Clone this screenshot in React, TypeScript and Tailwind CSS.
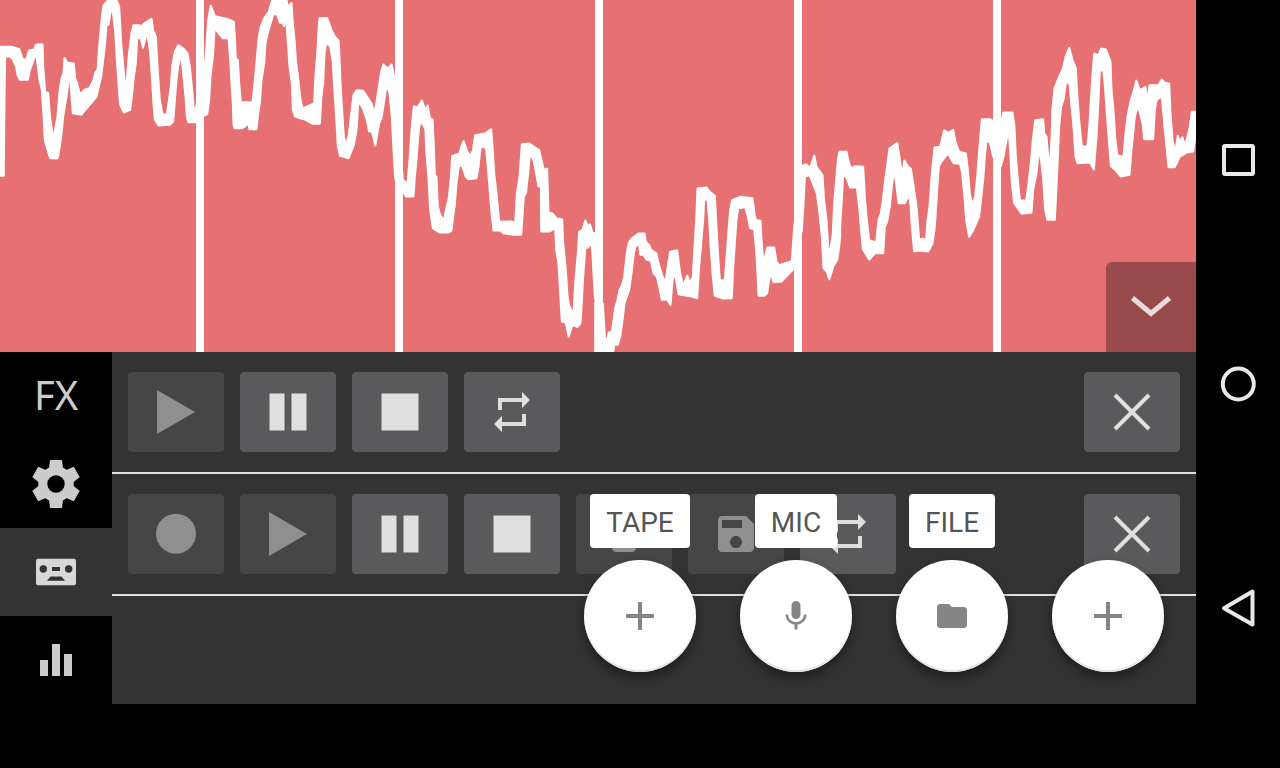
import type { ReactNode } from 'react'

/* Outline of the recorded signal, in thirds of a pixel, one closed shape per stretch. */
const WAVE: { shift: string; points: string }[] = [
  {
    shift: 'translate(0 0)',
    points:
      '0,140 35,140 58,147 68,175 72,180 80,175 86,152 104,147 107,134 128,132 130,200 136,275 145,278 150,345 157,395 162,410 166,380 172,350 178,275 184,235 190,220 193,172 203,188 222,190 226,235 232,250 240,282 255,268 268,264 280,240 285,218 292,210 298,130 304,60 310,15 325,0 350,0 358,20 364,130 370,195 375,250 380,240 386,165 394,100 400,75 418,75 422,80 432,70 455,55 460,92 468,110 473,200 480,300 488,343 500,343 505,310 512,260 516,200 524,155 535,135 550,145 563,160 570,200 578,280 582,335 588,320 612,215 618,150 624,60 632,15 645,48 685,57 702,65 705,110 708,175 714,180 718,250 724,320 728,306 748,306 757,308 764,240 770,175 776,110 782,80 792,55 806,35 816,0 860,0 864,20 875,8 878,60 885,130 888,180 895,235 901,290 901,355 885,350 878,330 875,250 868,200 864,140 858,60 852,80 846,65 840,70 830,42 820,45 806,90 797,130 793,190 785,240 780,310 775,340 770,388 748,388 745,370 735,380 726,385 704,385 700,375 698,310 694,250 690,180 685,115 668,115 652,95 644,88 640,160 632,230 628,300 622,343 612,348 588,367 565,367 560,350 556,290 550,230 545,180 540,180 535,200 530,240 525,300 520,365 510,375 475,377 464,358 460,310 455,230 450,160 442,103 435,120 429,145 422,115 412,115 408,190 402,230 396,290 391,330 371,338 360,315 355,250 350,180 345,95 338,35 332,35 326,75 320,75 316,130 310,180 304,230 290,290 275,308 244,345 218,340 214,290 210,240 206,240 200,290 190,350 184,410 175,470 172,476 150,475 145,460 134,420 130,345 125,270 118,240 110,175 104,170 98,190 90,210 84,240 60,240 52,225 48,200 38,178 30,170 16,170 14,300 12,490 12,528 0,528',
  },
  {
    shift: 'translate(900 150)',
    points:
      '0,140 8,175 30,165 42,160 46,75 52,0 55,-60 58,-96 82,-96 95,-60 105,-40 116,-28 118,0 122,100 128,200 132,260 138,285 146,255 152,200 160,135 170,120 190,122 215,160 223,190 230,150 236,110 242,70 250,42 262,55 275,42 285,90 309,390 322,400 328,330 335,230 341,168 352,172 366,150 375,178 384,165 390,205 398,208 402,290 405,375 410,380 414,470 420,492 432,512 437,480 445,450 452,385 456,318 478,310 484,288 491,272 500,298 510,318 518,303 525,255 555,250 574,237 578,290 583,370 590,430 598,515 635,514 645,520 650,430 658,380 665,282 688,280 718,300 732,360 742,355 746,487 758,490 770,505 787,507 790,580 797,650 803,735 807,765 820,790 825,700 833,610 837,545 847,540 856,510 864,528 870,522 878,548 885,550 885,750 880,670 875,580 863,595 858,585 855,610 850,680 845,770 842,820 832,832 818,825 806,862 797,818 785,815 780,730 775,640 768,600 765,535 748,545 723,545 722,410 715,410 708,370 700,330 690,312 684,380 678,430 672,440 664,555 642,555 610,550 600,542 580,542 573,480 567,400 558,295 548,290 542,293 536,350 530,385 505,388 497,380 485,345 477,350 470,400 465,465 460,500 455,542 445,548 418,548 398,535 390,480 385,385 378,300 376,240 370,225 360,218 355,260 350,330 345,380 341,440 318,440 309,425 285,385 280,300 275,200 268,130 260,105 255,140 245,205 238,220 226,288 215,245 207,245 200,210 190,180 180,160 175,165 170,240 162,285 146,325 120,318 113,290 108,200 102,110 97,28 90,-10 84,-18 78,-15 74,10 70,100 65,135 60,222 38,222 12,208 0,205',
  },
  {
    shift: 'translate(1680 360)',
    points:
      '105,545 129,550 135,650 142,660 145,638 155,635 160,600 165,565 172,540 178,510 186,495 192,470 200,400 205,370 215,355 235,340 254,340 258,365 268,375 275,390 290,400 296,430 305,460 312,480 318,475 324,430 330,395 352,390 357,430 362,465 370,495 382,465 390,490 398,470 402,400 408,300 412,205 440,202 450,215 465,228 470,320 475,410 480,480 494,480 500,400 505,330 510,270 516,240 540,230 578,234 585,290 590,300 602,302 605,360 611,430 617,400 622,382 643,382 650,425 658,435 680,428 695,423 702,320 726,138 738,132 750,143 763,105 770,140 788,165 792,230 800,300 805,380 810,395 818,340 822,250 828,180 833,120 838,95 841,95 841,350 838,380 832,420 820,440 808,480 800,455 790,445 785,350 778,280 770,220 760,195 748,165 735,172 730,270 726,330 702,447 688,460 665,485 640,487 633,460 628,480 622,520 612,528 595,528 592,460 588,390 582,328 570,325 562,285 555,262 535,265 530,300 525,370 520,440 516,535 490,536 464,528 458,470 452,390 447,300 442,240 433,238 430,300 424,370 418,440 412,535 395,530 380,528 355,523 348,480 342,462 338,480 332,557 322,540 305,540 298,505 290,470 280,460 272,422 260,420 250,405 240,405 238,378 228,375 222,400 215,460 208,510 194,550 188,600 182,645 174,675 163,675 160,696 105,696',
  },
  {
    shift: 'translate(2520 120)',
    points:
      '-1,335 20,335 28,372 35,385 45,378 70,380 75,470 80,530 88,600 108,607 115,540 122,520 128,480 135,420 142,370 148,325 172,308 178,345 183,380 187,400 193,360 205,380 213,385 220,430 230,500 238,600 248,595 258,600 262,540 268,500 275,400 283,322 300,320 312,270 325,278 340,268 348,310 358,335 378,340 384,390 390,460 397,495 405,470 412,400 418,320 425,237 450,237 459,242 483,248 490,217 518,217 524,260 528,350 534,420 540,480 558,482 565,430 572,370 578,300 585,240 610,237 613,280 620,290 625,350 628,390 634,300 637,205 643,145 655,115 668,85 678,45 688,22 698,60 708,85 712,160 718,240 726,320 742,318 748,250 755,130 762,40 775,45 783,25 798,28 812,65 815,150 820,200 826,290 832,345 850,350 855,290 862,230 872,180 880,155 889,120 900,150 917,140 922,185 928,135 955,135 965,118 975,128 988,130 992,220 998,300 1006,335 1013,285 1020,305 1027,290 1035,315 1042,290 1048,265 1055,215 1068,215 1068,285 1060,335 1040,338 1020,350 1008,375 1004,382 985,382 980,330 972,250 965,170 950,180 945,210 940,298 912,298 908,255 900,220 893,200 885,230 880,280 875,330 869,405 842,410 830,395 812,378 806,300 800,220 795,150 790,92 780,92 775,200 770,290 762,390 750,368 712,370 706,350 700,260 694,200 688,130 678,128 672,175 664,200 658,260 652,400 645,540 622,540 615,510 610,430 604,370 600,345 595,350 590,400 580,450 575,518 545,522 522,490 515,430 510,330 505,268 500,300 492,345 483,380 459,350 450,310 440,300 435,350 430,420 418,530 400,570 387,592 378,540 372,460 366,400 360,372 340,370 325,342 318,348 305,365 297,380 292,450 285,560 278,610 265,635 235,632 222,635 215,560 210,480 205,470 195,490 175,490 168,430 163,395 157,430 150,500 142,545 135,560 130,640 105,640 88,660 68,628 62,560 57,500 50,443 30,443 20,415 10,402 6,480 0,570',
  },
]

const MARKERS = [588, 1185, 1785, 2382, 2979]

function Waveform() {
  return (
    <svg viewBox="0 0 3588 1056" preserveAspectRatio="none" className="block h-full w-full" fill="#fff" aria-hidden="true">
      {WAVE.map((part) => (
        <polygon
          key={part.shift}
          transform={part.shift}
          points={part.points}
          stroke="#fff"
          strokeWidth="5"
          strokeLinejoin="bevel"
        />
      ))}
      {MARKERS.map((x) => (
        <rect key={x} x={x} y="0" width="24" height="1056" />
      ))}
    </svg>
  )
}

function Glyph({ children }: { children: ReactNode }) {
  return (
    <svg viewBox="0 0 48 48" className="size-12 shrink-0" fill="currentColor" aria-hidden="true">
      {children}
    </svg>
  )
}

const PlayGlyph = () => (
  <Glyph>
    <path d="M5 2v44l38-22z" />
  </Glyph>
)
const PauseGlyph = () => (
  <Glyph>
    <path d="M5.500 5.500h15v37h-15zM27.500 5.500h15v37h-15z" />
  </Glyph>
)
const StopGlyph = () => (
  <Glyph>
    <path d="M5.500 5.500h37v37h-37z" />
  </Glyph>
)
const RecordGlyph = () => (
  <Glyph>
    <circle cx="24" cy="23.700" r="20" />
  </Glyph>
)
const LoopGlyph = () => (
  <Glyph>
    <path d="M14 14h20v6l8-8-8-8v6H10v12h4zM34 34H14v-6l-8 8 8 8v-6h24V26h-4z" />
  </Glyph>
)
const TrashGlyph = () => (
  <Glyph>
    <path d="M12 38c0 2.200 1.800 4 4 4h16c2.200 0 4-1.800 4-4V14H12zM38 8h-7l-2-2H19l-2 2h-7v4h28z" />
  </Glyph>
)
const SaveGlyph = () => (
  <Glyph>
    <path d="M34 6H10c-2.210 0-4 1.790-4 4v28c0 2.210 1.790 4 4 4h28c2.210 0 4-1.790 4-4V14zM24 38c-3.310 0-6-2.690-6-6s2.690-6 6-6 6 2.690 6 6-2.690 6-6 6zm6-20H10v-8h20z" />
  </Glyph>
)
const CloseGlyph = () => (
  <Glyph>
    <path d="M7 7l34 34M41 7L7 41" fill="none" stroke="currentColor" strokeWidth="4" />
  </Glyph>
)

const PlusGlyph = () => (
  <Glyph>
    <path d="M38 26H26v12h-4V26H10v-4h12V10h4v12h12z" />
  </Glyph>
)
const MicGlyph = () => (
  <svg viewBox="0 0 24 24" className="size-9" fill="currentColor" aria-hidden="true">
    <path d="M12 14c1.660 0 2.990-1.340 2.990-3L15 5c0-1.660-1.340-3-3-3S9 3.340 9 5v6c0 1.660 1.340 3 3 3zm5.300-3c0 3-2.540 5.100-5.300 5.100S6.700 14 6.700 11H5c0 3.410 2.720 6.230 6 6.720V21h2v-3.280c3.280-.48 6-3.300 6-6.720z" />
  </svg>
)
const FolderGlyph = () => (
  <svg viewBox="0 0 24 24" className="size-9" fill="currentColor" aria-hidden="true">
    <path d="M10 4H4c-1.100 0-1.990.9-1.990 2L2 18c0 1.100.9 2 2 2h16c1.100 0 2-.9 2-2V8c0-1.100-.9-2-2-2h-8z" />
  </svg>
)

const GearGlyph = () => (
  <Glyph>
    <circle cx="24" cy="24" r="13.200" fill="none" stroke="currentColor" strokeWidth="9" />
    {[0, 60, 120, 180, 240, 300].map((angle) => (
      <path key={angle} transform={`rotate(${angle} 24 24)`} d="M18 .6Q18 0 18.600 0h10.800q.6 0 .6.6l1 6.800L33 11H15l2-3.600z" />
    ))}
  </Glyph>
)
const CassetteGlyph = () => (
  <Glyph>
    <path
      fillRule="evenodd"
      d="M6 10.700h36a2 2 0 0 1 2 2v22.600a2 2 0 0 1-2 2H6a2 2 0 0 1-2-2V12.700a2 2 0 0 1 2-2zM11.300 17.300a3.700 3.700 0 1 0 0 7.400 3.700 3.700 0 1 0 0-7.400zM36.700 17.300a3.700 3.700 0 1 0 0 7.400 3.700 3.700 0 1 0 0-7.400zM20 19v4h8v-4zM18.500 28.500L15 32.700h18l-3.500-4.200z"
    />
  </Glyph>
)
const BarsGlyph = () => (
  <Glyph>
    <path d="M8 24h8v16H8zM20 8h8v32h-8zM32 18h8v22h-8z" />
  </Glyph>
)

function PadButton({ label, disabled = false, children }: { label: string; disabled?: boolean; children: ReactNode }) {
  return (
    <button
      type="button"
      aria-label={label}
      disabled={disabled}
      className="flex h-20 w-24 shrink-0 items-center justify-center rounded bg-[#5a5a5c] text-[#dfdfdf] disabled:bg-[#464646] disabled:text-[#8f8f8f]"
    >
      {children}
    </button>
  )
}

function TrackRow({ name, children }: { name: string; children: ReactNode }) {
  return (
    <section aria-label={name} className="flex justify-between border-b-2 border-[#e0e0e0] px-4 py-5">
      <div className="flex gap-4">{children}</div>
      <PadButton label="Remove track">
        <CloseGlyph />
      </PadButton>
    </section>
  )
}

function SideTab({ label, active = false, children }: { label: string; active?: boolean; children: ReactNode }) {
  return (
    <button
      type="button"
      aria-label={label}
      aria-pressed={active}
      className="flex h-22 items-center justify-center text-[#cccccc] aria-pressed:bg-[#333333] aria-pressed:text-[#d8d8d8]"
    >
      {children}
    </button>
  )
}

function RoundAction({ label, caption, children }: { label: string; caption?: string; children: ReactNode }) {
  return (
    <button type="button" aria-label={label} className="flex w-28 flex-col items-center gap-3">
      {caption && (
        <span className="flex h-[54px] items-center rounded bg-white px-4 pt-[3px] text-[28px] leading-8 text-[#555555]">
          {caption}
        </span>
      )}
      <span className="flex size-28 items-center justify-center rounded-full bg-white text-[#858585] shadow-[0_6px_12px_rgba(0,0,0,0.4),inset_0_-2px_1px_#e2e2e2]">
        {children}
      </span>
    </button>
  )
}

function NavButton({ label, children }: { label: string; children: ReactNode }) {
  return (
    <button type="button" aria-label={label} className="flex flex-1 items-center justify-center">
      <svg viewBox="0 0 48 48" className="size-12" fill="none" stroke="#e8e8e8" strokeWidth="4" strokeLinejoin="round" aria-hidden="true">
        {children}
      </svg>
    </button>
  )
}

export default function App() {
  return (
    <div className="flex min-h-screen bg-black font-['Roboto',sans-serif]">
      <main className="min-w-0 flex-1">
        <div className="relative h-[352px] bg-[#e67072]">
          <Waveform />
          <button
            type="button"
            aria-label="Collapse waveform"
            className="absolute right-0 bottom-0 flex size-[90px] items-center justify-center rounded-tl-md bg-[#984a4d] text-[#eadcdc]"
          >
            <Glyph>
              <path d="M5.500 15L24 30.500 42.500 15" fill="none" stroke="currentColor" strokeWidth="5" />
            </Glyph>
          </button>
        </div>

        <div className="flex">
          <aside className="flex w-28 shrink-0 flex-col">
            <SideTab label="FX">
              <span className="pb-0.5 font-['Noto_Sans','Open_Sans',sans-serif] text-[40px] leading-10">FX</span>
            </SideTab>
            <SideTab label="Settings">
              <GearGlyph />
            </SideTab>
            <SideTab label="Tape" active>
              <CassetteGlyph />
            </SideTab>
            <SideTab label="Levels">
              <BarsGlyph />
            </SideTab>
          </aside>

          <div className="relative min-w-0 flex-1 bg-[#333333]">
            <TrackRow name="Track 1">
              <PadButton label="Play" disabled>
                <PlayGlyph />
              </PadButton>
              <PadButton label="Pause">
                <PauseGlyph />
              </PadButton>
              <PadButton label="Stop">
                <StopGlyph />
              </PadButton>
              <PadButton label="Loop">
                <LoopGlyph />
              </PadButton>
            </TrackRow>
            <TrackRow name="Track 2">
              <PadButton label="Record" disabled>
                <RecordGlyph />
              </PadButton>
              <PadButton label="Play" disabled>
                <PlayGlyph />
              </PadButton>
              <PadButton label="Pause">
                <PauseGlyph />
              </PadButton>
              <PadButton label="Stop">
                <StopGlyph />
              </PadButton>
              <PadButton label="Delete" disabled>
                <TrashGlyph />
              </PadButton>
              <PadButton label="Save" disabled>
                <SaveGlyph />
              </PadButton>
              <PadButton label="Loop">
                <LoopGlyph />
              </PadButton>
            </TrackRow>

            <div className="absolute right-8 bottom-8 flex items-end gap-11">
              <RoundAction label="Add tape" caption="TAPE">
                <PlusGlyph />
              </RoundAction>
              <RoundAction label="Add microphone" caption="MIC">
                <MicGlyph />
              </RoundAction>
              <RoundAction label="Add file" caption="FILE">
                <FolderGlyph />
              </RoundAction>
              <RoundAction label="Add">
                <PlusGlyph />
              </RoundAction>
            </div>
          </div>
        </div>
      </main>

      <nav aria-label="System" className="flex w-[84px] shrink-0 flex-col py-12">
        <NavButton label="Recent apps">
          <rect x="10" y="10" width="29" height="28" rx="1" />
        </NavButton>
        <NavButton label="Home">
          <circle cx="24.300" cy="24" r="15.500" />
        </NavButton>
        <NavButton label="Back">
          <path d="M10 24.300L38.500 7.500v33z" />
        </NavButton>
      </nav>
    </div>
  )
}
